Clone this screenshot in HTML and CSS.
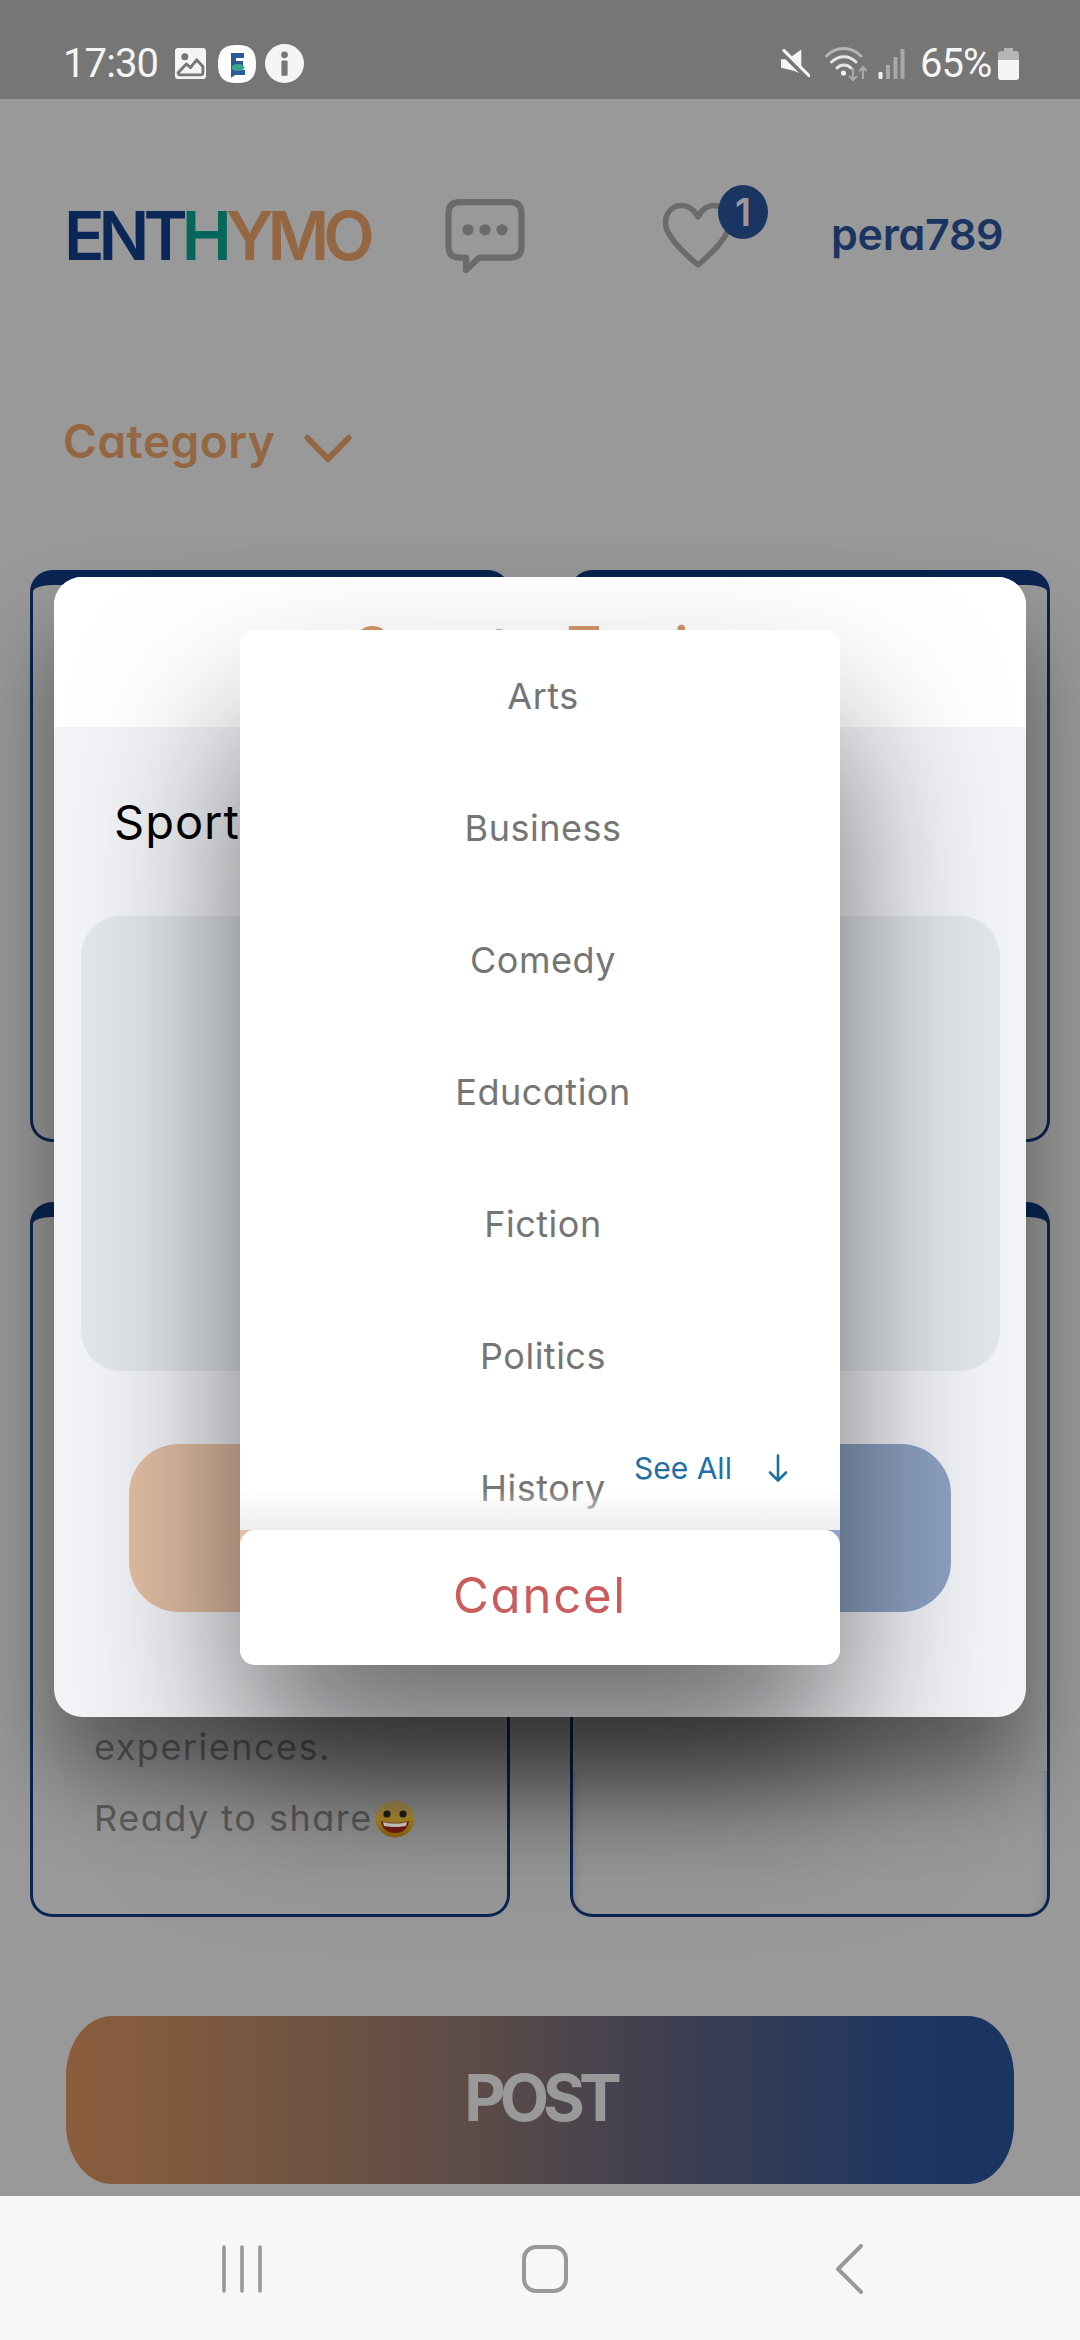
FILE: index.html
```html
<!DOCTYPE html>
<html lang="en">
<head>
<meta charset="utf-8">
<title>Enthymo</title>
<link rel="stylesheet" href="styles.css">
</head>
<body>
<div class="screen">
  <div class="statusbar">
    <div class="status-left">
      <span class="time">17:30</span>
      <svg class="ic-image" viewBox="0 0 30 30"><rect width="30" height="30" rx="3" fill="#f5f5f5"/><circle cx="9.500" cy="8.500" r="3.400" fill="#767676"/><path d="M3 24 L11 15.500 L15 19 L21 11.500 L27 18 V24 Q27 26 25 26 H4 Z" fill="none" stroke="#767676" stroke-width="2.800" stroke-linejoin="round"/></svg>
      <svg class="ic-e" viewBox="0 0 38 38"><path d="M19 0 C32 0 38 5 38 19 C38 33 32 38 19 38 C6 38 0 33 0 19 C0 5 6 0 19 0 Z" fill="#fff"/><path d="M13 8 H26 V13 H18 V16 H25 V20 H18 V25 H27 V30 H17 L13 33 Z" fill="#2a5a9a"/><ellipse cx="20" cy="22.500" rx="6.500" ry="3.500" fill="#3aa58e"/></svg>
      <svg class="ic-info" viewBox="0 0 38 38"><circle cx="19" cy="19" r="19" fill="#f5f5f5"/><circle cx="19" cy="10.500" r="3.300" fill="#767676"/><rect x="16" y="16" width="6" height="15" rx="1" fill="#767676"/></svg>
    </div>
    <div class="status-right">
      <svg class="ic-mute" viewBox="0 0 30 30"><path d="M0 10 H7 L21 0 V25 L13 22 L0 19 Z" fill="#f5f5f5"/><path d="M1 3 L29 31" stroke="#767676" stroke-width="5"/><path d="M3 1 L29 27" stroke="#f5f5f5" stroke-width="3.200" stroke-linecap="round"/></svg>
      <svg class="ic-wifi" viewBox="0 0 43 34"><g fill="none" stroke="#b5b5b5" stroke-width="3" stroke-linecap="round"><path d="M1.500 9 C11 -1 26 -1 36 9"/><g stroke="#e6e6e6"><path d="M6.500 15 C14 8 24 8 31 15"/><path d="M12 21 C16 17 22 17 26 21"/></g></g><circle cx="18.500" cy="26" r="2.600" fill="#f0f0f0"/><g fill="none" stroke="#a8a8a8" stroke-width="2.200"><path d="M28 21 V33 M24 29 L28 33 L32 29"/><path d="M38 32 V20 M34.500 24 L38 20 L41.500 24"/></g></svg>
      <svg class="ic-signal" viewBox="0 0 26 30"><rect x="0" y="23" width="4" height="7" rx="1" fill="#eee"/><rect x="7.500" y="16" width="4" height="14" fill="#a8a8a8"/><rect x="15" y="8" width="4" height="22" fill="#a8a8a8"/><rect x="22" y="0" width="4" height="30" fill="#a8a8a8"/></svg>
      <span class="battery-text">65%</span>
      <svg class="ic-battery" viewBox="0 0 21 32"><path d="M6 0 H15 V3 H18 Q21 3 21 6 V12 H0 V6 Q0 3 3 3 H6 Z" fill="#b5b5b5"/><path d="M0 12 H21 V29 Q21 32 18 32 H3 Q0 32 0 29 Z" fill="#f5f5f5"/></svg>
    </div>
  </div>

  <header class="topbar">
    <div class="logo"><span class="navy">ENT</span><span class="green">H</span><span class="brown">YMO</span></div>
    <svg class="ic-chat" viewBox="0 0 77 73"><path d="M14 3 H63 Q74 3 74 14 V47 Q74 57 63 57 H33 L20 69 V57 H14 Q3 57 3 47 V14 Q3 3 14 3 Z" fill="none" stroke="#6b6b6b" stroke-width="6" stroke-linejoin="round"/><circle cx="22" cy="30" r="5.500" fill="#6b6b6b"/><circle cx="38.500" cy="30" r="5.500" fill="#6b6b6b"/><circle cx="55" cy="30" r="5.500" fill="#6b6b6b"/></svg>
    <div class="likes">
      <svg class="ic-heart" viewBox="0 0 70 68"><path d="M35 16 C30 6 21 3 14 5 C5 8 1 17 3 26 C6 38 22 53 35 64 C48 53 63 38 66 26 C68 17 64 8 55 5 C48 3 40 6 35 16 Z" fill="none" stroke="#6b6b6b" stroke-width="5.500" stroke-linejoin="round"/></svg>
      <span class="badge">1</span>
    </div>
    <div class="username">pera789</div>
  </header>

  <div class="category">
    <span class="category-label">Category</span>
    <svg class="ic-chevron" viewBox="0 0 47 30"><path d="M3 4 L23.500 25 L44 4" fill="none" stroke="#946642" stroke-width="6" stroke-linecap="round" stroke-linejoin="round"/></svg>
  </div>

  <div class="cards">
    <article class="card"></article>
    <article class="card"></article>
    <article class="card">
      <p class="card-text">experiences.</p>
      <p class="card-text">Ready to share<svg class="emoji" viewBox="0 0 40 38"><defs><linearGradient id="face" x1="0" y1="0" x2="0" y2="1"><stop offset="0" stop-color="#a89464"/><stop offset=".5" stop-color="#bd962c"/><stop offset="1" stop-color="#94660f"/></linearGradient></defs><ellipse cx="20" cy="19" rx="19.500" ry="18.500" fill="url(#face)"/><circle cx="12" cy="14" r="3.600" fill="#222"/><circle cx="28" cy="14" r="3.600" fill="#222"/><path d="M6 21 Q20 25 34 21 Q32 33 20 33 Q8 33 6 21 Z" fill="#7a1d14"/><path d="M8 22 Q20 25 32 22 L31 26 Q20 28 9 26 Z" fill="#e6e2da"/></svg></p>
    </article>
    <article class="card"><div class="card-media"></div></article>
  </div>

  <button class="post">POST</button>

  <nav class="navbar">
    <svg class="ic-recents" viewBox="0 0 42 48"><path d="M3 2 V46 M21 2 V46 M39 2 V46" stroke="#999" stroke-width="3.600" stroke-linecap="round"/></svg>
    <svg class="ic-home" viewBox="0 0 46 48"><rect x="2" y="2" width="42" height="44" rx="12" fill="none" stroke="#999" stroke-width="4"/></svg>
    <svg class="ic-back" viewBox="0 0 28 50"><path d="M26 2 L3 25 L26 48" fill="none" stroke="#999" stroke-width="4" stroke-linecap="round" stroke-linejoin="round"/></svg>
  </nav>

  <section class="modal">
    <div class="modal-head"><h2 class="modal-title">Create Topic</h2></div>
    <div class="modal-body">
      <div class="topic-name">Sports</div>
      <div class="topic-input"></div>
      <div class="modal-actions">
        <div class="action action-cancel"></div>
        <div class="action action-save"></div>
      </div>
    </div>
  </section>

  <section class="sheet">
    <div class="sheet-list">
      <div class="sheet-item">Arts</div>
      <div class="sheet-item">Business</div>
      <div class="sheet-item">Comedy</div>
      <div class="sheet-item">Education</div>
      <div class="sheet-item">Fiction</div>
      <div class="sheet-item">Politics</div>
      <div class="sheet-item">History</div>
      <div class="see-all"><span>See All</span><svg class="ic-down" viewBox="0 0 20 28"><path d="M10 1 V26 M2 18 L10 26 L18 18" fill="none" stroke="#1f6fa5" stroke-width="2.600" stroke-linecap="round" stroke-linejoin="round"/></svg></div>
    </div>
    <div class="sheet-cancel">Cancel</div>
  </section>
</div>
</body>
</html>
```

FILE: styles.css
```css
* { box-sizing: border-box; margin: 0; padding: 0; }
html, body { width: 1080px; height: 2340px; overflow: hidden; }
body { font-family: Inter, "Liberation Sans", sans-serif; font-feature-settings: "cv11" 1; background: #999; }
svg { display: block; flex: none; }
.screen { position: relative; width: 1080px; height: 2340px; overflow: hidden; background: #999; }

.statusbar { height: 99px; background: #767676; display: flex; justify-content: space-between; align-items: center; padding: 28px 61px 0 63px; font-family: Roboto, sans-serif; color: #f5f5f5; }
.status-left, .status-right { display: flex; align-items: center; }
.time { font-size: 40px; letter-spacing: -.900px; width: 112px; }
.ic-image { width: 31px; height: 31px; }
.ic-e { width: 38px; height: 38px; margin-left: 12px; }
.ic-info { width: 39px; height: 39px; margin-left: 9px; }
.ic-mute { width: 29px; height: 30px; }
.ic-wifi { width: 43px; height: 34px; margin-left: 15px; }
.ic-signal { width: 27px; height: 30px; margin-left: 10px; }
.battery-text { font-size: 40px; letter-spacing: -1px; width: 78px; margin-left: 15px; }
.ic-battery { width: 21px; height: 32px; }

.topbar { display: flex; align-items: center; height: 136px; margin-top: 68px; }
.logo { width: 445px; padding-left: 64px; font-size: 67px; font-weight: 600; letter-spacing: -6px; white-space: nowrap; }
.navy { color: #0a2758; }
.green { color: #04665a; }
.brown { color: #946642; }
.ic-chat { width: 80px; height: 75px; margin-top: 3px; }
.likes { position: relative; width: 168px; height: 80px; margin-left: 138px; display: flex; align-items: center; }
.ic-heart { width: 70px; height: 68px; }
.badge { position: absolute; left: 55px; top: -10px; width: 50px; height: 54px; border-radius: 50%; background: #1a3562; color: #999; font-size: 38px; font-weight: 600; display: flex; align-items: center; justify-content: center; }
.username { font-size: 43px; font-weight: 600; color: #1a3562; letter-spacing: -.300px; margin-top: -2px; }

.category { display: flex; align-items: center; height: 60px; margin-top: 108px; padding-left: 63px; }
.category-label { font-size: 46px; font-weight: 600; color: #946642; letter-spacing: .500px; width: 241px; }
.ic-chevron { width: 48px; height: 30px; margin-top: 15px; }

.cards { display: grid; grid-template-columns: 480px 480px; grid-template-rows: 572px 715px; column-gap: 60px; row-gap: 60px; margin-top: 99px; padding-left: 30px; }
.card { border: 3px solid #0a2552; border-top-width: 15px; border-radius: 22px; display: flex; flex-direction: column; justify-content: flex-end; padding: 0 0 60px 61px; }
.card-text { font-size: 36px; line-height: 71px; color: #5e5e5e; letter-spacing: 1.500px; display: flex; align-items: center; white-space: nowrap; }
.emoji { width: 40px; height: 38px; margin-left: 2px; }
.card:nth-child(4) { padding: 0; }
.card-media { height: 143px; border-radius: 0 0 18px 18px; box-shadow: inset 7px 0 6px -5px rgba(40,60,100,.22), inset -7px 0 6px -5px rgba(40,60,100,.22); }

.post { display: flex; align-items: center; justify-content: center; width: 948px; height: 168px; margin: 99px 0 0 66px; padding-bottom: 5px; border: 0; border-radius: 46px / 60px; background: linear-gradient(90deg, #8a5d3d 0%, #805a3e 12%, #5a4a48 45%, #3c3e52 65%, #1a3562 92%); color: #999; font: 700 64px Inter, sans-serif; letter-spacing: -6px; }

.navbar { position: relative; display: flex; align-items: center; height: 144px; margin-top: 12px; background: #f7f7f7; padding-left: 221px; }
.ic-recents { width: 42px; height: 48px; margin-top: 2px; }
.ic-home { width: 46px; height: 48px; margin-left: 259px; margin-top: 2px; }
.ic-back { width: 28px; height: 50px; margin-left: 267px; margin-top: 2px; }

.modal { position: absolute; left: 54px; top: 577px; width: 972px; height: 1140px; border-radius: 28px; background: #f3f4f8; box-shadow: 0 60px 90px rgba(0,0,0,.42); overflow: hidden; display: flex; flex-direction: column; }
.modal-head { height: 150px; background: #fff; padding-top: 39px; }
.modal-title { font-size: 52px; line-height: 60px; font-weight: 600; color: #d4956a; text-align: center; letter-spacing: 4.500px; }
.modal-body { flex: 1; padding-top: 65px; }
.topic-name { font-size: 47px; line-height: 60px; color: #000; padding-left: 60px; letter-spacing: 1px; }
.topic-input { width: 919px; height: 455px; margin: 64px 0 0 27px; border-radius: 40px; background: #e2e7ec; }
.modal-actions { display: flex; justify-content: space-between; height: 168px; margin: 73px 75px 0; }
.action { width: 330px; border-radius: 50px; }
.action-cancel { background: #e3bfa4; }
.action-save { background: #8fa3c4; }

.sheet { position: absolute; left: 240px; top: 630px; width: 600px; height: 1035px; border-radius: 15px; box-shadow: 0 100px 160px rgba(0,0,0,.55); display: flex; flex-direction: column; }
.sheet-list { position: relative; height: 900px; overflow: hidden; background: #fff; border-radius: 15px 15px 0 0; }
.sheet-list::after { content: ""; position: absolute; left: 0; right: 0; bottom: 0; height: 40px; background: linear-gradient(rgba(238,238,238,0), #ededed); }
.sheet-item { height: 132px; display: flex; align-items: center; justify-content: center; padding-left: 6px; font-size: 36px; color: #757575; letter-spacing: .500px; }
.see-all { position: absolute; left: 394px; top: 820px; display: flex; align-items: center; gap: 36px; font-size: 30px; color: #1f6fa5; z-index: 1; }
.ic-down { width: 20px; height: 29px; }
.sheet-cancel { position: relative; height: 135px; padding-bottom: 5px; background: #fff; border-radius: 15px; display: flex; align-items: center; justify-content: center; font-size: 49px; color: #cb5c5c; letter-spacing: 1.800px; }
```
